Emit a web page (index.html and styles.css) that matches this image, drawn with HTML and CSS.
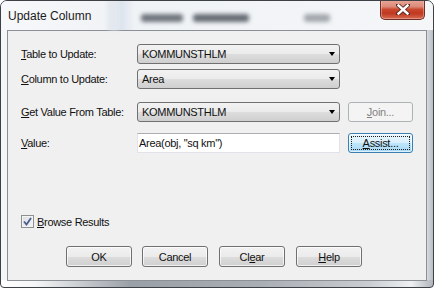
FILE: index.html
```html
<!DOCTYPE html>
<html>
<head>
<meta charset="utf-8">
<link rel="stylesheet" href="styles.css">
</head>
<body>
<div class="window">
  <div class="titlebar">
    <span class="title">Update Column</span>
    <div class="ghost">
      <span class="band"></span>
      <span class="blob b1"></span>
      <span class="blob b2"></span>
      <span class="blob b3"></span>
    </div>
    <div class="close">
      <svg width="14" height="11" viewBox="0 0 14 11">
        <path d="M2 1 L12 10 M12 1 L2 10" stroke="#5a2a22" stroke-width="4.2" stroke-linecap="square"/>
        <path d="M2.5 1.5 L11.5 9.5 M11.5 1.5 L2.5 9.5" stroke="#fff" stroke-width="2.4" stroke-linecap="square"/>
      </svg>
    </div>
  </div>
  <div class="client">
    <div class="form">
      <div class="row r1">
        <span class="label"><u>T</u>able to Update:</span>
        <div class="combo"><span>KOMMUNSTHLM</span><i class="arrow"></i></div>
      </div>
      <div class="row r2">
        <span class="label"><u>C</u>olumn to Update:</span>
        <div class="combo"><span>Area</span><i class="arrow"></i></div>
      </div>
      <div class="row r3">
        <span class="label"><u>G</u>et Value From Table:</span>
        <div class="combo"><span>KOMMUNSTHLM</span><i class="arrow"></i></div>
        <div class="btn side disabled"><u>J</u>oin...</div>
      </div>
      <div class="row r4">
        <span class="label"><u>V</u>alue:</span>
        <div class="edit">Area(obj, "sq km")</div>
        <div class="btn side focused"><span class="focus"><u>A</u>ssist...</span></div>
      </div>
    </div>
    <div class="check">
      <span class="box">
        <svg width="9" height="9" viewBox="0 0 9 9"><path d="M1 4.5 L3.5 7.5 L8 1" fill="none" stroke="#4b5f8e" stroke-width="1.8"/></svg>
      </span>
      <span class="ctext"><u>B</u>rowse Results</span>
    </div>
    <div class="buttons">
      <div class="btn">OK</div>
      <div class="btn">Cancel</div>
      <div class="btn">Cl<u>e</u>ar</div>
      <div class="btn"><u>H</u>elp</div>
    </div>
  </div>
</div>
</body>
</html>
```

FILE: styles.css
```css
* { box-sizing: border-box; }
html, body { margin: 0; padding: 0; background: #ffffff; }
body { width: 434px; height: 288px; overflow: hidden; }

.window {
  width: 434px;
  height: 288px;
  border: 1px solid #3d4146;
  border-radius: 7px 7px 4px 4px;
  background:
    linear-gradient(to right, #ffffff 0%, #f4f5f6 8%, #9aa0a7 30%, #a9aeb4 60%, #c9cdd1 85%, #eef0f2 95%, #b0b5ba 100%) bottom / 100% 7px no-repeat,
    linear-gradient(to right, #f4f6f8 0%, #eef1f4 30%, #f6f7f9 60%, #e4e7eb 98%, #b9bec4 100%);
  display: flex;
  flex-direction: column;
  overflow: hidden;
}

.titlebar {
  height: 29px;
  flex: none;
  display: flex;
  align-items: flex-start;
  background: linear-gradient(to right, #f7f8fa 0%, #f1f3f6 24%, #e4e9f0 26%, #dde5ee 28%, #f0f3f6 31%, #f4f6f8 100%);
}

.title {
  font: 12px "Liberation Sans", Arial, sans-serif;
  color: #1b1b1b;
  margin: 8px 0 0 7px;
  width: 99px;
  flex: none;
}

.ghost {
  flex: 1;
  height: 29px;
  display: flex;
  align-items: center;
  filter: blur(2px);
}
.band {
  width: 10px;
  height: 29px;
  background: #e3e8ef;
  margin-left: 2px;
  flex: none;
}
.blob {
  height: 8px;
  background: #6f757d;
  flex: none;
  border-radius: 3px;
  margin-top: 5px;
}
.b1 { width: 42px; margin-left: 22px; }
.b2 { width: 56px; margin-left: 10px; background: #666c74; }
.b3 { width: 26px; margin-left: 55px; background: #a2a7ad; }

.close {
  width: 45px;
  height: 20px;
  margin: -1px 8px 0 0;
  flex: none;
  border: 1px solid #6b2f26;
  border-top: none;
  border-radius: 0 0 5px 5px;
  background: linear-gradient(to bottom, #e9a899 0%, #dc8a78 35%, #c9472e 50%, #c0381f 70%, #d56b52 100%);
  box-shadow: inset 0 0 0 1px rgba(255, 200, 190, 0.45);
  display: flex;
  align-items: center;
  justify-content: center;
}

.client {
  flex: 1;
  margin: 0 6px 6px 6px;
  border: 1px solid #8b9096;
  background: #f0f0f0;
  display: flex;
  flex-direction: column;
  padding: 13px 0 0 13px;
  font: 11px "Liberation Sans", Arial, sans-serif;
  letter-spacing: -0.3px;
  color: #111;
}

.form { display: flex; flex-direction: column; }
.row { display: flex; align-items: center; height: 20px; }
.r2 { margin-top: 5px; }
.r3 { margin-top: 13px; }
.r4 { margin-top: 11px; }

.label { width: 116px; flex: none; }

.combo {
  width: 203px;
  height: 20px;
  flex: none;
  border: 1px solid #707070;
  border-radius: 3px;
  background: linear-gradient(to bottom, #f2f2f2 0%, #ebebeb 50%, #dddddd 51%, #cfcfcf 100%);
  display: flex;
  align-items: center;
  padding: 0 4px 0 4px;
}
.combo span { flex: 1; }
.arrow {
  width: 0;
  height: 0;
  border-left: 3.5px solid transparent;
  border-right: 3.5px solid transparent;
  border-top: 4px solid #000;
  flex: none;
}

.edit {
  width: 203px;
  height: 20px;
  flex: none;
  background: #fff;
  border: 1px solid #e2e3ea;
  border-top-color: #abadb3;
  padding: 0 2px 0 1px;
  display: flex;
  align-items: center;
}

.btn {
  width: 66px;
  height: 21px;
  flex: none;
  border: 1px solid #707070;
  border-radius: 3px;
  background: linear-gradient(to bottom, #f2f2f2 0%, #ebebeb 50%, #dddddd 51%, #cfcfcf 100%);
  box-shadow: inset 0 0 0 1px rgba(255, 255, 255, 0.7);
  display: flex;
  align-items: center;
  justify-content: center;
}
.side { width: 65px; height: 20px; margin-left: 8px; }
.disabled {
  border-color: #adb2b5;
  background: #f4f4f4;
  box-shadow: none;
  color: #838383;
}
.focused {
  border-color: #3c7fb1;
  background: linear-gradient(to bottom, #eaf6fd 0%, #d9f0fc 50%, #bee6fd 51%, #a7d9f5 100%);
  box-shadow: inset 0 0 0 1px rgba(255, 255, 255, 0.6);
  padding: 2px;
}
.focus {
  flex: 1;
  align-self: stretch;
  border: 1px dotted #1f1f1f;
  display: flex;
  align-items: center;
  justify-content: center;
}

.check {
  display: flex;
  align-items: center;
  margin-top: 62px;
  height: 13px;
}
.box {
  width: 13px;
  height: 13px;
  border: 1px solid #8e8f8f;
  background: linear-gradient(135deg, #dcdee3 0%, #f4f5f7 100%);
  box-shadow: inset 0 0 0 1px #f4f4f4;
  display: flex;
  align-items: center;
  justify-content: center;
  flex: none;
}
.ctext { margin-left: 3px; }

.buttons {
  display: flex;
  margin-top: 18px;
  padding-left: 45px;
  gap: 11px;
}
.buttons .btn:nth-child(2) { margin-left: -1px; }
```
